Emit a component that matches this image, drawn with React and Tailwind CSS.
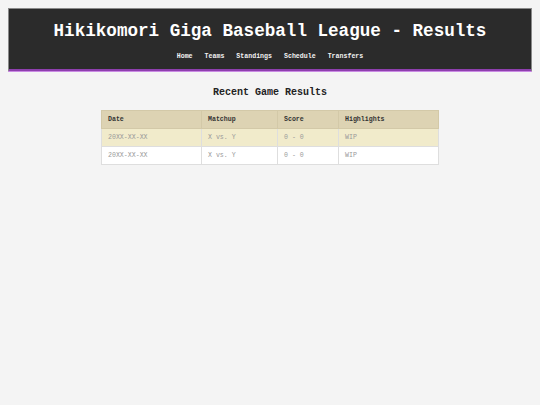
import React from 'react';

const rows = [
    { date: "20XX-XX-XX", matchup: "X vs. Y", score: "0 - 0", highlights: "WIP" },
    { date: "20XX-XX-XX", matchup: "X vs. Y", score: "0 - 0", highlights: "WIP" },
];

const App = () => {
    return (
        <div className="min-h-screen bg-[#f4f4f4] p-2 font-['Liberation_Mono',monospace]">
            <header className="bg-[#2b2b2b] border border-[#8a8a8a] border-b-0 shadow-[0_1px_0_#c98ae3]">
                <div className="border-b-2 border-[#8e3fae] pt-[11px] pb-[7px]">
                    <h1 className="text-center text-[17.6px] leading-[22px] font-bold text-white">
                        Hikikomori Giga Baseball League - Results
                    </h1>
                    <nav className="flex justify-center gap-[12px] mt-[10px] text-[6.6px] leading-[10px] font-bold text-[#f2f2f2]">
                        <span>Home</span>
                        <span>Teams</span>
                        <span>Standings</span>
                        <span>Schedule</span>
                        <span>Transfers</span>
                    </nav>
                </div>
            </header>

            <main className="flex flex-col items-center">
                <h2 className="mt-[16px] text-[10px] leading-[12px] font-bold text-[#222]">Recent Game Results</h2>
                <table className="mt-[11px] w-[338px] border-collapse text-[6.6px] text-left border border-[#d6d6d6]">
                    <thead>
                        <tr className="bg-[#ddd3b3] text-[#333] font-bold h-[18px]">
                            <th className="w-[100px] px-[6px] border border-[#d3c9a8]">Date</th>
                            <th className="w-[76px] px-[6px] border border-[#d3c9a8]">Matchup</th>
                            <th className="w-[61px] px-[6px] border border-[#d3c9a8]">Score</th>
                            <th className="px-[6px] border border-[#d3c9a8]">Highlights</th>
                        </tr>
                    </thead>
                    <tbody>
                        {rows.map((r, i) => (
                            <tr key={i} className={`h-[18px] text-[#9a9a9a] ${i === 0 ? "bg-[#f1ebcb]" : "bg-white"}`}>
                                <td className="px-[6px] border border-[#dedede]">{r.date}</td>
                                <td className="px-[6px] border border-[#dedede]">{r.matchup}</td>
                                <td className="px-[6px] border border-[#dedede]">{r.score}</td>
                                <td className="px-[6px] border border-[#dedede]">{r.highlights}</td>
                            </tr>
                        ))}
                    </tbody>
                </table>
            </main>
        </div>
    );
};

export default App;
